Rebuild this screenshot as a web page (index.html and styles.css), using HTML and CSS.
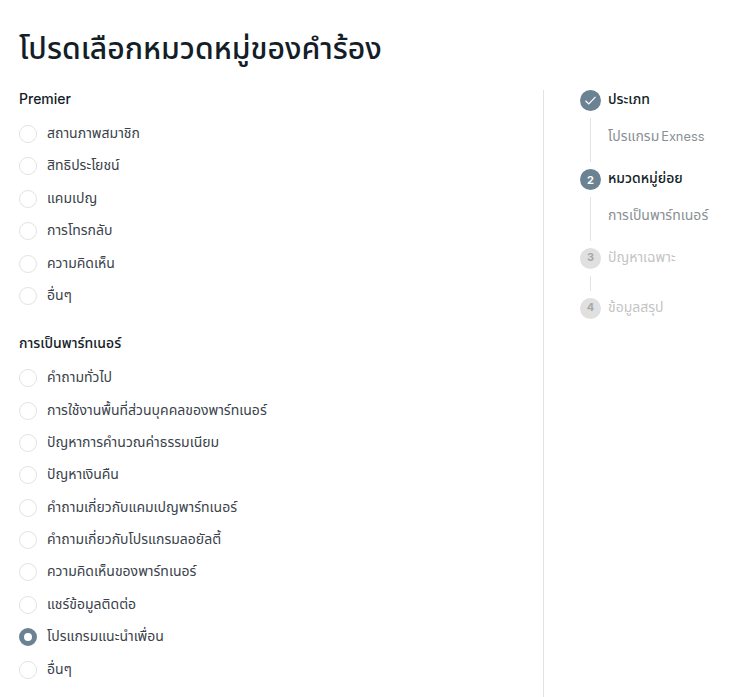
FILE: index.html
```html
<!DOCTYPE html>
<html lang="th">
<head>
    <meta charset="UTF-8">
    <meta name="viewport" content="width=device-width, initial-scale=1.0">
    <title>โปรดเลือกหมวดหมู่ของคำร้อง</title>
    <link rel="stylesheet" href="styles.css">
</head>
<body>
    <h1 class="page-title">โปรดเลือกหมวดหมู่ของคำร้อง</h1>

    <div class="layout">
        <div class="form-col">
            <section class="group">
                <h2 class="group-title">Premier</h2>
                <label class="option"><span class="radio"></span><span class="option-text">สถานภาพสมาชิก</span></label>
                <label class="option"><span class="radio"></span><span class="option-text">สิทธิประโยชน์</span></label>
                <label class="option"><span class="radio"></span><span class="option-text">แคมเปญ</span></label>
                <label class="option"><span class="radio"></span><span class="option-text">การโทรกลับ</span></label>
                <label class="option"><span class="radio"></span><span class="option-text">ความคิดเห็น</span></label>
                <label class="option"><span class="radio"></span><span class="option-text">อื่นๆ</span></label>
            </section>

            <section class="group">
                <h2 class="group-title">การเป็นพาร์ทเนอร์</h2>
                <label class="option"><span class="radio"></span><span class="option-text">คำถามทั่วไป</span></label>
                <label class="option"><span class="radio"></span><span class="option-text">การใช้งานพื้นที่ส่วนบุคคลของพาร์ทเนอร์</span></label>
                <label class="option"><span class="radio"></span><span class="option-text">ปัญหาการคำนวณค่าธรรมเนียม</span></label>
                <label class="option"><span class="radio"></span><span class="option-text">ปัญหาเงินคืน</span></label>
                <label class="option"><span class="radio"></span><span class="option-text">คำถามเกี่ยวกับแคมเปญพาร์ทเนอร์</span></label>
                <label class="option"><span class="radio"></span><span class="option-text">คำถามเกี่ยวกับโปรแกรมลอยัลตี้</span></label>
                <label class="option"><span class="radio"></span><span class="option-text">ความคิดเห็นของพาร์ทเนอร์</span></label>
                <label class="option"><span class="radio"></span><span class="option-text">แชร์ข้อมูลติดต่อ</span></label>
                <label class="option"><span class="radio checked"></span><span class="option-text">โปรแกรมแนะนำเพื่อน</span></label>
                <label class="option"><span class="radio"></span><span class="option-text">อื่นๆ</span></label>
            </section>
        </div>

        <aside class="steps">
            <div class="step">
                <div class="step-head">
                    <span class="step-num done">
                        <svg width="13" height="11" viewBox="0 0 13 11"><path d="M1.5 5.8 L4.8 9 L11.5 1.8" fill="none" stroke="#fff" stroke-width="1.2"/></svg>
                    </span>
                    <span class="step-name">ประเภท</span>
                </div>
                <div class="step-body">โปรแกรม <span class="latin">Exness</span></div>
            </div>
            <div class="step">
                <div class="step-head">
                    <span class="step-num">2</span>
                    <span class="step-name">หมวดหมู่ย่อย</span>
                </div>
                <div class="step-body">การเป็นพาร์ทเนอร์</div>
            </div>
            <div class="step off">
                <div class="step-head">
                    <span class="step-num">3</span>
                    <span class="step-name">ปัญหาเฉพาะ</span>
                </div>
                <div class="step-body empty"></div>
            </div>
            <div class="step off">
                <div class="step-head">
                    <span class="step-num">4</span>
                    <span class="step-name">ข้อมูลสรุป</span>
                </div>
            </div>
        </aside>
    </div>
</body>
</html>
```

FILE: styles.css
```css
html, body {
    height: 100%;
}

body {
    margin: 0;
    padding: 0 0 0 19px;
    overflow: hidden;
    background: #fff;
    color: #141e28;
    font-family: Inter, "Noto Sans Thai", "Noto Sans", sans-serif;
}

.page-title {
    margin: 0;
    padding-top: 25px;
    height: 65px;
    font-size: 30.2px;
    line-height: 46px;
    font-weight: 500;
}

.layout {
    display: flex;
}

.form-col {
    width: 524px;
    flex-shrink: 0;
    height: 607px;
    border-right: 1px solid #e3e3e3;
}

.group {
    margin-bottom: 22px;
}

.group-title {
    margin: 0;
    padding-top: 1px;
    height: 26.8px;
    font-size: 14px;
    line-height: 16px;
    font-weight: 500;
}

.option {
    display: flex;
    align-items: center;
    gap: 10px;
    height: 32.4px;
    font-size: 14px;
    color: #3a424b;
}

.option-text {
    padding-bottom: 1px;
}

.radio {
    width: 18px;
    height: 18px;
    box-sizing: border-box;
    border: 1px solid #e3e3e3;
    border-radius: 50%;
    background: #fff;
}

.radio.checked {
    border: 5px solid #6b8293;
}

.steps {
    padding-left: 36px;
    font-size: 14px;
}

.step-head {
    display: flex;
    align-items: center;
    gap: 7px;
    height: 21px;
}

.step-num {
    width: 21px;
    height: 21px;
    border-radius: 50%;
    background: #6b8293;
    color: #fff;
    font-size: 11px;
    font-weight: 700;
    display: flex;
    align-items: center;
    justify-content: center;
}

.step-name {
    padding-bottom: 3px;
    font-weight: 500;
    color: #141e28;
}

.step-body {
    margin: 7px 0 7px 10px;
    height: 44px;
    border-left: 1px solid #e3e3e3;
    padding-left: 17px;
    line-height: 36px;
    color: #8a8f94;
}

.latin {
    margin-left: -2px;
    font-size: 12.8px;
}

.step-body.empty {
    height: 15px;
}

.step.off .step-num {
    padding-bottom: 3px;
    box-sizing: border-box;
    background: #e0e0e0;
    color: #a8a8a8;
}

.step.off .step-name {
    color: #c4c4c4;
    font-weight: 400;
}
```
